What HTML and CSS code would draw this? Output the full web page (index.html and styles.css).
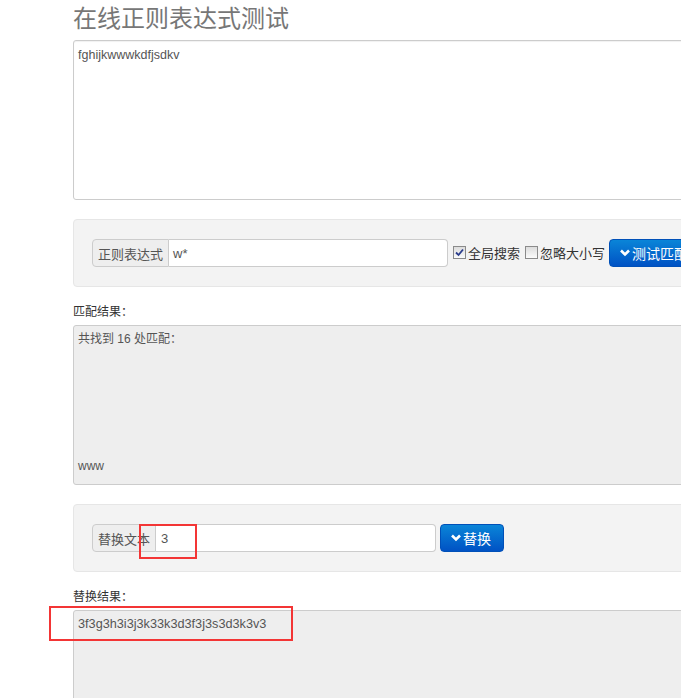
FILE: index.html
```html
<!DOCTYPE html>
<html lang="zh-CN">
<head>
  <meta charset="UTF-8">
  <title>在线正则表达式测试</title>
  <link rel="stylesheet" href="styles.css">
</head>
<body>
  <div class="container">
    <h1>在线正则表达式测试</h1>
    <div class="source">fghijkwwwkdfjsdkv</div>

    <div class="well">
      <div class="input-group">
        <span class="addon">正则表达式</span>
        <span class="field field-regex">w*</span>
      </div>
      <label class="check"><span class="box checked"><svg viewBox="0 0 9 9" width="9" height="9"><path d="M1 4.5 L3.5 7 L8 1.5" fill="none" stroke="#2c3e8c" stroke-width="1.8"/></svg></span>全局搜索</label>
      <label class="check"><span class="box"></span>忽略大小写</label>
      <button class="btn"><svg class="chev" viewBox="0 0 10 8" width="10" height="8"><path d="M1 1.5 L5 5.5 L9 1.5" fill="none" stroke="#fff" stroke-width="2.6"/></svg>测试匹配</button>
    </div>

    <div class="label">匹配结果：</div>
    <div class="output">
      <div>共找到 16 处匹配：</div>
      <div class="last">www</div>
    </div>

    <div class="well">
      <div class="input-group">
        <span class="addon">替换文本</span>
        <span class="field field-replace">3</span>
      </div>
      <button class="btn"><svg class="chev" viewBox="0 0 10 8" width="10" height="8"><path d="M1 1.5 L5 5.5 L9 1.5" fill="none" stroke="#fff" stroke-width="2.6"/></svg>替换</button>
    </div>

    <div class="label">替换结果：</div>
    <div class="output">
      <div class="replaced">3f3g3h3i3j3k33k3d3f3j3s3d3k3v3</div>
    </div>
  </div>

  <div class="mark mark-input"></div>
  <div class="mark mark-result"></div>
</body>
</html>
```

FILE: styles.css
```css
html {
  overflow: hidden;
}
body {
  margin: 0;
  background: #fff;
  color: #555;
  font-family: "Liberation Sans", "Noto Sans CJK SC", sans-serif;
  font-size: 12px;
  position: relative;
  height: 698px;
}
.container {
  margin-left: 73px;
  width: 720px;
}
h1 {
  margin: 3px 0 5px 0;
  font-size: 24px;
  font-weight: normal;
  line-height: 32px;
  color: #777;
}
.source {
  height: 148px;
  border: 1px solid #ccc;
  border-radius: 3px;
  padding: 5px 4px;
  font-size: 12.5px;
  line-height: 18px;
  box-shadow: inset 0 1px 1px rgba(0,0,0,0.06);
  margin-bottom: 19px;
}
.well {
  display: flex;
  align-items: center;
  height: 28px;
  padding: 19px 18px;
  background: #f3f3f3;
  border: 1px solid #e6e6e6;
  border-radius: 4px;
  margin-bottom: 16px;
}
.input-group {
  display: flex;
  height: 28px;
}
.addon {
  display: flex;
  align-items: center;
  padding: 0 5px 0 5px;
  background: #eee;
  border: 1px solid #ccc;
  border-radius: 4px 0 0 4px;
  font-size: 13px;
  color: #555;
}
.field {
  display: flex;
  align-items: center;
  padding: 0 4px;
  background: #fff;
  border: 1px solid #ccc;
  border-left: none;
  border-radius: 0 4px 4px 0;
  font-size: 13px;
  color: #555;
}
.field-regex {
  width: 270px;
}
.field-replace {
  width: 270px;
  padding-left: 5px;
}
.check {
  display: flex;
  align-items: center;
  margin-left: 5px;
  font-size: 13px;
  color: #333;
  padding-bottom: 2px;
}
.box {
  display: flex;
  align-items: center;
  justify-content: center;
  width: 11px;
  height: 11px;
  margin-right: 2px;
  border: 1px solid #8a8a8a;
  background: linear-gradient(#dcdcdc, #fbfbfb);
}
.btn {
  display: flex;
  align-items: center;
  height: 28px;
  margin-left: 4px;
  padding: 0 12px 1px 10px;
  border: 1px solid #0050b8;
  border-radius: 4px;
  background: linear-gradient(#0a85d8, #0052c4);
  color: #fff;
  font-family: inherit;
  font-size: 14px;
  white-space: nowrap;
}
.chev {
  margin-right: 2px;
}
.label {
  line-height: 18px;
  color: #333;
  margin-bottom: 4px;
}
.output {
  display: flex;
  flex-direction: column;
  height: 148px;
  padding: 4px 4px 6px 4px;
  background: #eee;
  border: 1px solid #ccc;
  border-radius: 3px;
  line-height: 18px;
  margin-bottom: 19px;
}
.output .last {
  margin-top: auto;
  margin-bottom: 3px;
}
.output .replaced {
  font-size: 12.7px;
}
.mark {
  position: absolute;
  border: 2px solid #f33535;
}
.mark-input {
  left: 139px;
  top: 524px;
  width: 54px;
  height: 31px;
}
.mark-result {
  left: 49px;
  top: 606px;
  width: 240px;
  height: 31px;
}
```
